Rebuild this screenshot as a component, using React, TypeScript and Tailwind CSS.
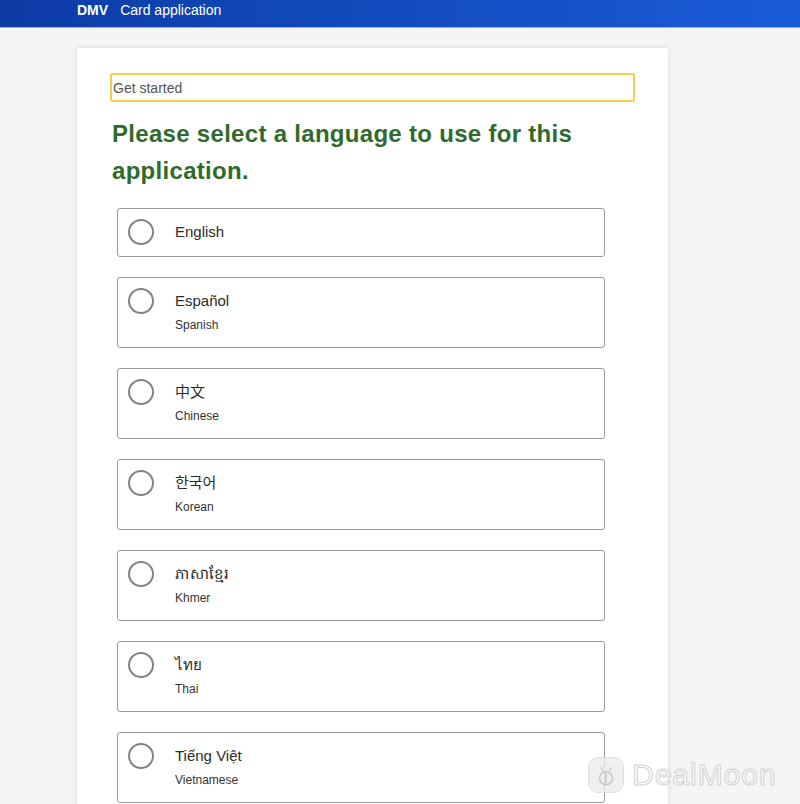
import { useState } from 'react'

type Lang = { id: string; label: string; sub?: string }

const LANGS: Lang[] = [
  { id: 'en', label: 'English' },
  { id: 'es', label: 'Español', sub: 'Spanish' },
  { id: 'zh', label: '中文', sub: 'Chinese' },
  { id: 'ko', label: '한국어', sub: 'Korean' },
  { id: 'km', label: 'ភាសាខ្មែរ', sub: 'Khmer' },
  { id: 'th', label: 'ไทย', sub: 'Thai' },
  { id: 'vi', label: 'Tiếng Việt', sub: 'Vietnamese' },
]

function Option({ lang, checked, onSelect }: { lang: Lang; checked: boolean; onSelect: () => void }) {
  return (
    <button
      onClick={onSelect}
      className="flex w-full items-start rounded-[3px] border border-[#9a9a9a] bg-white px-[10px] pt-[10px] pb-[11px] text-left"
    >
      <span className="flex h-[26px] w-[26px] shrink-0 items-center justify-center rounded-full border-2 border-[#828282]">
        {checked && <span className="h-[14px] w-[14px] rounded-full bg-[#1a5bd6]" />}
      </span>
      <span className="ml-[21px] flex flex-col">
        <span className="h-[26px] text-[15px] leading-[26px] text-[#2b2b2b]">{lang.label}</span>
        {lang.sub && <span className="mt-[3px] mb-[3px] text-[12px] leading-[16px] text-[#333]">{lang.sub}</span>}
      </span>
    </button>
  )
}

export default function App() {
  const [picked, setPicked] = useState<string | null>(null)

  return (
    <div
      className="relative min-h-screen bg-[#f5f5f5]"
      style={{ fontFamily: '"Liberation Sans", Arial, "Noto Sans CJK KR", "Noto Sans CJK SC", sans-serif' }}
    >
      <header className="flex h-[28px] items-start border-b border-[#8fb0e8] bg-gradient-to-r from-[#0c3ca6] to-[#1a5cd8] pt-[2px] pl-[77px]">
        <span className="text-[14px] leading-[16px] font-bold text-white">DMV</span>
        <span className="ml-[12px] text-[14px] leading-[16px] text-white">Card application</span>
      </header>

      <main className="ml-[77px] mt-[20px] w-[591px] bg-white px-[33px] pt-[25px] pb-[40px] shadow-[0_0_6px_rgba(0,0,0,0.12)]">
        <div className="h-[29px] rounded-[2px] border-2 border-[#f3cd4f] px-[1px] text-[14px] leading-[26px] text-[#555]">
          Get started
        </div>

        <h1 className="mt-[13px] pl-[2px] text-[24px] font-bold leading-[37px] tracking-[0.3px] text-[#2f6b2b]">
          Please select a language to use for this application.
        </h1>

        <div className="mt-[19px] ml-[7px] flex w-[488px] flex-col gap-[20px]">
          {LANGS.map((l) => (
            <Option key={l.id} lang={l} checked={picked === l.id} onSelect={() => setPicked(l.id)} />
          ))}
        </div>
      </main>

      <div className="pointer-events-none absolute left-[588px] top-[752px] flex items-center gap-[8px] opacity-80">
        <div className="flex h-[36px] w-[36px] items-center justify-center rounded-[10px] border border-[#d8d8d8] bg-[#ececec]">
          <svg width="22" height="24" viewBox="0 0 20 22" fill="none" stroke="#bdbdbd" strokeWidth="1.5">
            <circle cx="10" cy="14" r="6" />
            <path d="M5 4 L7 7 M15 4 L13 7 M10 9 V19" />
          </svg>
        </div>
        <span className="text-[30px] tracking-[1px] text-white" style={{ WebkitTextStroke: '1px #c9c9c9' }}>
          DealMoon
        </span>
      </div>
    </div>
  )
}
